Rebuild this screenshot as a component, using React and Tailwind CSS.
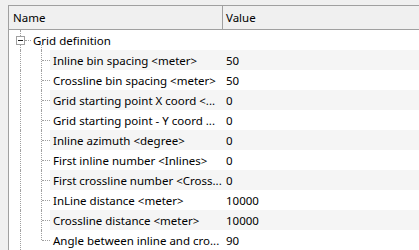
import React from 'react';

const rows = [
  ['Inline bin spacing <meter>', '50'],
  ['Crossline bin spacing <meter>', '50'],
  ['Grid starting point X coord <...', '0'],
  ['Grid starting point - Y coord ...', '0'],
  ['Inline azimuth <degree>', '0'],
  ['First inline number <Inlines>', '0'],
  ['First crossline number <Cross...', '0'],
  ['InLine distance <meter>', '10000'],
  ['Crossline distance <meter>', '10000'],
  ['Angle between inline and cro...', '90'],
];

// dotted tree guide pieces
const vLine = 'absolute border-l border-dotted border-[#a0a0a0]';
const hLine = 'absolute border-t border-dotted border-[#a0a0a0]';

function RootRow() {
  return (
    <div className="flex h-5">
      <div className="relative w-[24px] shrink-0">
        <div className={`${vLine} left-[11px] top-0 h-[6px]`} />
        <div className={`${vLine} left-[11px] top-[15px] h-[5px]`} />
        <div className="absolute left-[7px] top-[6px] flex h-[9px] w-[9px] items-center justify-center border border-[#a0a0a0] bg-white">
          <div className="h-px w-[5px] bg-[#1e1e1e]" />
        </div>
        <div className={`${hLine} left-[16px] top-[10px] w-[6px]`} />
      </div>
      <div className="relative flex-1 whitespace-nowrap leading-[22px]">
        Grid definition
        <div className={`${vLine} left-[8px] top-[15px] h-[5px]`} />
      </div>
    </div>
  );
}

function ChildRow({ label, value, shaded, last }) {
  return (
    <div className="flex h-5">
      <div className="relative w-[41px] shrink-0">
        <div className={`${vLine} left-[11px] top-0 h-5`} />
        <div className={`${vLine} left-[32px] top-0 ${last ? 'h-[10px]' : 'h-5'}`} />
        <div className={`${hLine} left-[33px] top-[10px] w-[8px]`} />
      </div>
      <div className={`flex flex-1 leading-[22px] ${shaded ? 'bg-[#f5f5f5]' : ''}`}>
        <div className="w-[173px] shrink-0 overflow-hidden whitespace-nowrap pl-[3px]">{label}</div>
        <div className="pl-[3px]">{value}</div>
      </div>
    </div>
  );
}

export default function App() {
  return (
    <div
      className="h-[250px] w-[419px] overflow-hidden bg-[#f0f0f0] pl-2 pt-[5px] text-[11.5px] text-black"
      style={{ fontFamily: '"Noto Sans", "Open Sans", sans-serif' }}
    >
      <div className="h-full border-l border-t border-[#a0a0a0] bg-white">
        {/* header */}
        <div className="flex h-[24px] border-b border-[#a0a0a0] bg-[#f0f0f0] leading-[24px]">
          <div className="w-[214px] shrink-0 border-r border-[#a0a0a0] pl-1">Name</div>
          <div className="pl-[3px]">Value</div>
        </div>
        <RootRow />
        {rows.map(([label, value], i) => (
          <ChildRow
            key={label}
            label={label}
            value={value}
            shaded={i % 2 === 0}
            last={i === rows.length - 1}
          />
        ))}
      </div>
    </div>
  );
}
